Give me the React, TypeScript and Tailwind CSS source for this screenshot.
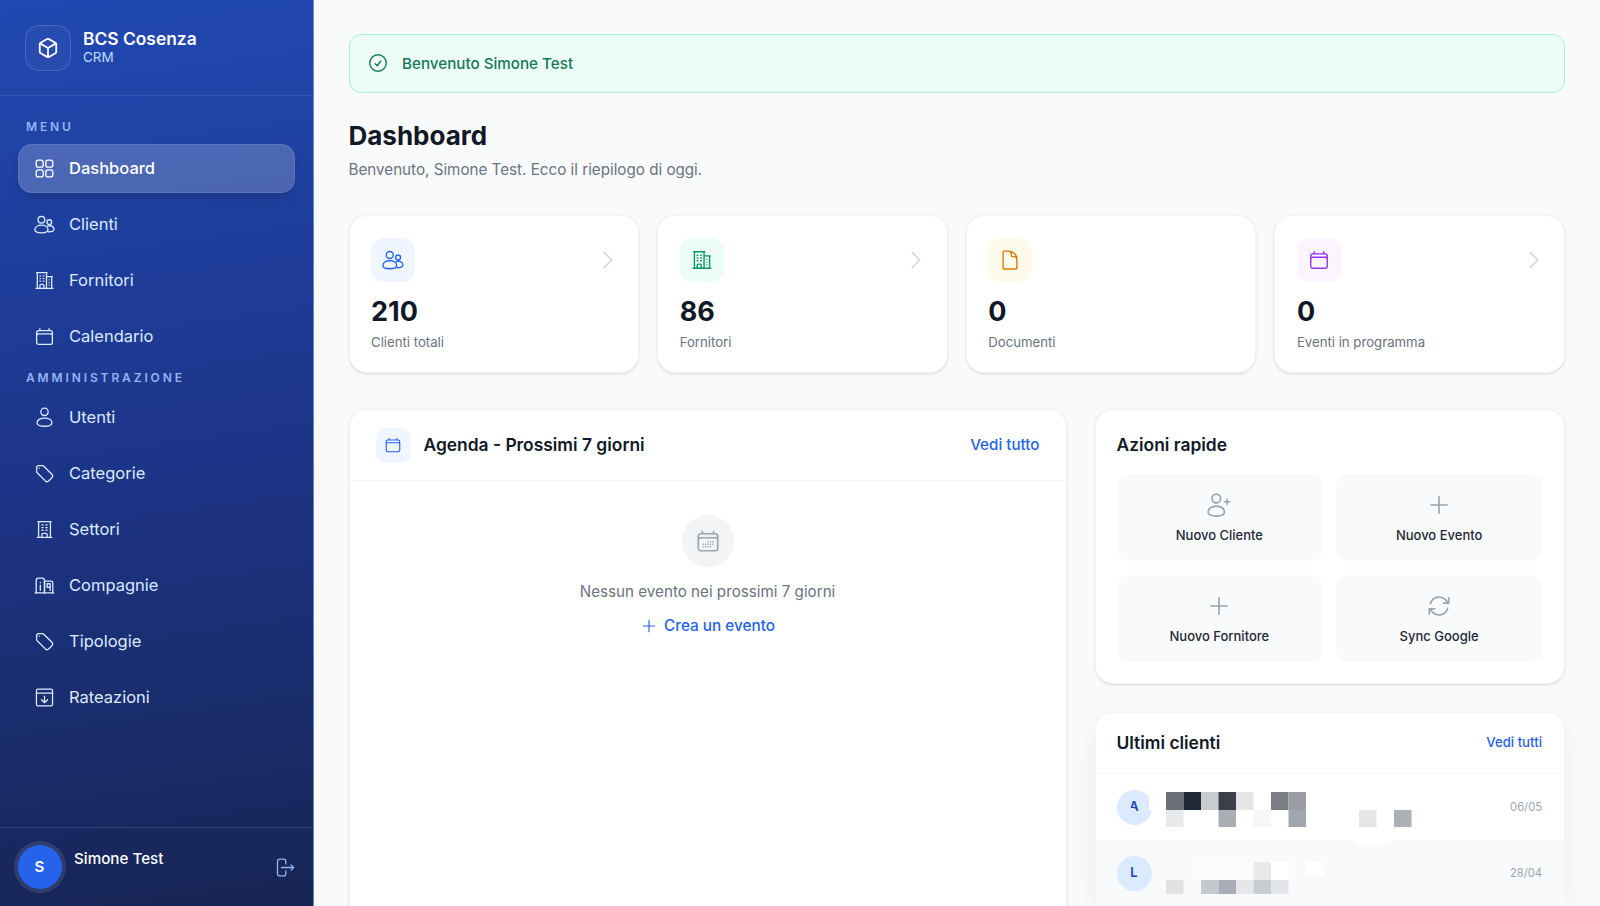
import type { ReactNode } from "react"
import { Box } from "lucide-react"
import {
  HiOutlineArrowPath,
  HiOutlineBuildingOffice,
  HiOutlineBuildingOffice2,
  HiOutlineCalendar,
  HiOutlineCalendarDays,
  HiOutlineCheckCircle,
  HiOutlineChevronRight,
  HiOutlineDocument,
  HiOutlinePlus,
  HiOutlineTag,
} from "react-icons/hi2"

type IconProps = { className?: string }

function Svg({ className, children }: IconProps & { children: ReactNode }) {
  return (
    <svg
      viewBox="0 0 24 24"
      fill="none"
      stroke="currentColor"
      strokeWidth={1.5}
      strokeLinecap="round"
      strokeLinejoin="round"
      className={className}
    >
      {children}
    </svg>
  )
}

function GridIcon({ className }: IconProps) {
  return (
    <Svg className={className}>
      <rect x="2.5" y="2.5" width="8" height="8" rx="2.5" />
      <rect x="13.5" y="2.5" width="8" height="8" rx="2.5" />
      <rect x="2.5" y="13.5" width="8" height="8" rx="2.5" />
      <rect x="13.5" y="13.5" width="8" height="8" rx="2.5" />
    </Svg>
  )
}

function UsersIcon({ className }: IconProps) {
  return (
    <Svg className={className}>
      <circle cx="8.5" cy="6.5" r="3.8" />
      <circle cx="17.5" cy="9.3" r="2.7" />
      <path d="M1 18c0-3 3.2-5.2 7.5-5.2S16 15 16 18c0 2.2-3.2 3.5-7.5 3.5S1 20.2 1 18z" />
      <path d="M15.5 13.8c.8-.3 1.6-.4 2.5-.4 2.5 0 4.8 1.5 4.8 3.8 0 2-2.2 3.3-6.3 3.3" />
    </Svg>
  )
}

function UserIcon({ className }: IconProps) {
  return (
    <Svg className={className}>
      <circle cx="12" cy="5.5" r="4.2" />
      <path d="M3.5 18c0-3.2 3.8-5.2 8.5-5.2s8.5 2 8.5 5.2c0 2.6-3.8 4-8.5 4s-8.5-1.4-8.5-4z" />
    </Svg>
  )
}

function UserPlusIcon({ className }: IconProps) {
  return (
    <Svg className={className}>
      <circle cx="9.5" cy="6" r="4" />
      <path d="M2 18.5c0-3.2 3.2-5.5 7.5-5.500s7.500 2.300 7.500 5.500c0 2.500-3.200 3.800-7.500 3.800S2 21 2 18.500z" />
      <path d="M19.5 6.5v5M17 9h5" />
    </Svg>
  )
}

function CompanyIcon({ className }: IconProps) {
  return (
    <Svg className={className}>
      <path d="M1.5 20.5h21" />
      <path d="M2.5 20.5V6.5c0-1.5 1-3 2.5-3h4.5c1.5 0 2.5 1.5 2.5 3v14" />
      <path d="M12 20.5V7h7.5c1.3 0 2 .8 2 2v11.5" />
      <path d="M7.2 8.5v.4M7.2 11.5v6" />
      <path d="M15 10h3.5v4H15zM18.5 14v3.5" />
    </Svg>
  )
}

function InstallmentIcon({ className }: IconProps) {
  return (
    <Svg className={className}>
      <rect x="2.8" y="2.5" width="18.4" height="19" rx="1.8" />
      <path d="M2.8 7h18.4M12 10.5v7.5M8.5 14.5 12 18l3.5-3.5" />
    </Svg>
  )
}

function LogoutIcon({ className }: IconProps) {
  return (
    <Svg className={className}>
      <path d="M13.5 8V5A2.5 2.5 0 0 0 11 2.5H6.5A2.5 2.5 0 0 0 4 5v14a2.500 2.500 0 0 0 2.500 2.500H11a2.500 2.500 0 0 0 2.500-2.500v-3" />
      <path d="M8.5 12h14M19.5 9l3 3-3 3" />
    </Svg>
  )
}

const menuItems = [
  { label: "Dashboard", icon: GridIcon, active: true },
  { label: "Clienti", icon: UsersIcon },
  { label: "Fornitori", icon: HiOutlineBuildingOffice2 },
  { label: "Calendario", icon: HiOutlineCalendar },
]

const adminItems = [
  { label: "Utenti", icon: UserIcon },
  { label: "Categorie", icon: HiOutlineTag },
  { label: "Settori", icon: HiOutlineBuildingOffice },
  { label: "Compagnie", icon: CompanyIcon },
  { label: "Tipologie", icon: HiOutlineTag },
  { label: "Rateazioni", icon: InstallmentIcon },
]

const stats = [
  { value: "210", label: "Clienti totali", icon: UsersIcon, box: "bg-[#eff6ff]", color: "text-[#2563eb]", arrow: true },
  { value: "86", label: "Fornitori", icon: HiOutlineBuildingOffice2, box: "bg-[#ecfdf5]", color: "text-[#059669]", arrow: true },
  { value: "0", label: "Documenti", icon: HiOutlineDocument, box: "bg-[#fffbeb]", color: "text-[#d97706]", arrow: false },
  { value: "0", label: "Eventi in programma", icon: HiOutlineCalendar, box: "bg-[#faf5ff]", color: "text-[#9333ea]", arrow: true },
]

const quickActions = [
  { label: "Nuovo Cliente", icon: UserPlusIcon },
  { label: "Nuovo Evento", icon: HiOutlinePlus },
  { label: "Nuovo Fornitore", icon: HiOutlinePlus },
  { label: "Sync Google", icon: HiOutlineArrowPath },
]

// mosaic blocks that hide the customer names: [x, y, w, h, colour]
const mosaicOne: [number, number, number, number, string][] = [
  [53, 18, 17, 18, "#ffffff"],
  [31, 34, 7, 4, "#dbeafe"],
  [70, 18, 17.5, 18, "#6b7078"],
  [87.5, 18, 17.5, 18, "#1f2937"],
  [105, 18, 17.5, 18, "#c9cbcf"],
  [122.5, 18, 17.5, 18, "#3a3f4b"],
  [140, 18, 17.5, 18, "#e5e6e7"],
  [175, 18, 17.5, 18, "#7b7f85"],
  [192.5, 18, 17.5, 18, "#9a9ca2"],
  [70, 36, 17.5, 17, "#e8e9ea"],
  [122.5, 36, 17.5, 17, "#a9adb4"],
  [157.5, 36, 17.5, 17, "#f7f7f8"],
  [192.5, 36, 17.5, 17, "#a0a5ae"],
  [263, 36, 17.5, 17, "#e5e6e8"],
  [298, 36, 17.5, 17, "#acb0b7"],
]

const mosaicTwo: [number, number, number, number, string][] = [
  [258, 0, 37, 5, "#ffffff"],
  [100, 22, 57, 18, "#fcfcfd"],
  [157.5, 22, 17.5, 18, "#e8e9eb"],
  [175, 22, 17.5, 18, "#ffffff"],
  [210, 22, 18, 14, "#ffffff"],
  [70, 40, 17.5, 14, "#e0e2e4"],
  [105, 40, 17.5, 14, "#c5c8ce"],
  [122.5, 40, 17.5, 14, "#a9adb8"],
  [140, 40, 17.5, 14, "#e5e7ea"],
  [157.5, 40, 17.5, 14, "#c9ccd3"],
  [175, 40, 17.5, 14, "#e2e4e7"],
]

function NavItem({ label, icon: Icon, active }: { label: string; icon: (p: IconProps) => ReactNode; active?: boolean }) {
  return (
    <a
      href="#"
      className={`mx-[18px] flex h-[49px] items-center gap-[14px] rounded-[14px] border px-[15px] text-[16.5px] ${
        active
          ? "border-white/10 bg-white/20 font-medium text-white shadow-lg"
          : "border-transparent text-[#dbeafe]"
      }`}
    >
      <Icon className="h-[21px] w-[21px] shrink-0" />
      {label}
    </a>
  )
}

function Sidebar() {
  return (
    <aside className="flex h-full w-[314px] shrink-0 flex-col border-r border-[#8ea5e0]/70 bg-[linear-gradient(172deg,#2149b3_0%,#1d3589_50%,#172554_100%)]">
      <div className="flex h-[96px] shrink-0 items-center gap-[12px] border-b border-white/10 px-[25px]">
        <div className="flex h-[46px] w-[46px] items-center justify-center rounded-[14px] border border-white/15 bg-white/3">
          <Box className="h-[22px] w-[22px] text-white" strokeWidth={2} />
        </div>
        <div className="-mt-[3px]">
          <div className="text-[17.4px] leading-[22px] font-semibold text-white">BCS Cosenza</div>
          <div className="text-[13.5px] leading-[15px] text-[#bfdbfe]">CRM</div>
        </div>
      </div>
      <nav className="flex flex-col gap-[7px] pt-[22px]">
        <div className="mb-[2px] h-[17px] px-[26px] text-[12px] leading-[17px] font-semibold tracking-[0.24em] text-[#93b4f5]">MENU</div>
        {menuItems.map((item) => (
          <NavItem key={item.label} {...item} />
        ))}
        <div className="mt-[0.5px] h-[17px] px-[26px] text-[12px] leading-[17px] font-semibold tracking-[0.24em] text-[#93b4f5]">AMMINISTRAZIONE</div>
        {adminItems.map((item) => (
          <NavItem key={item.label} {...item} />
        ))}
      </nav>
      <div className="mt-auto flex h-[79px] shrink-0 items-center border-t border-white/10 pr-[18px] pl-[17.5px]">
        <div className="flex h-[44px] w-[44px] shrink-0 items-center justify-center rounded-full bg-[#2563eb] text-[15px] font-semibold text-white ring-4 ring-white/10">S</div>
        <div className="ml-[12.5px] h-[44px] flex-1 pt-[2px] text-[15.2px] leading-[24px] font-medium text-white">Simone Test</div>
        <LogoutIcon className="h-[21px] w-[21px] text-[#93b4f5]" />
      </div>
    </aside>
  )
}

function StatCard({ value, label, icon: Icon, box, color, arrow }: (typeof stats)[number]) {
  return (
    <div className="h-[158px] rounded-[18px] border border-[#f3f4f6] bg-white p-[21.5px] shadow-sm">
      <div className="flex items-center justify-between">
        <div className={`flex h-[44px] w-[44px] items-center justify-center rounded-[12px] ${box}`}>
          <Icon className={`h-[22px] w-[22px] ${color}`} />
        </div>
        {arrow && <HiOutlineChevronRight className="-mr-[3px] h-[24px] w-[24px] text-[#d1d5db]" />}
      </div>
      <div className="mt-[13px] text-[27px] leading-[33px] font-bold text-[#111827]">{value}</div>
      <div className="mt-[4px] text-[13.2px] leading-[20px] text-[#6b7280]">{label}</div>
    </div>
  )
}

function ClientRow({ letter, date, mosaic, shaded }: { letter: string; date: string; mosaic: typeof mosaicOne; shaded?: boolean }) {
  return (
    <div className={`relative flex h-[66px] items-center justify-between pr-[22px] pl-[21px] ${shaded ? "bg-[#f9fafb]" : ""}`}>
      <div className="flex h-[35px] w-[35px] items-center justify-center rounded-full bg-[#dbeafe] text-[13px] font-semibold text-[#1e40af]">{letter}</div>
      <span className="text-[11.2px] text-[#9ca3af]">{date}</span>
      <svg className="absolute top-0 left-0 h-[66px] w-[340px]" viewBox="0 0 340 66">
        {mosaic.map(([x, y, w, h, fill]) => (
          <rect key={`${x}-${y}`} x={x} y={y} width={w} height={h} fill={fill} />
        ))}
      </svg>
    </div>
  )
}

export default function App() {
  return (
    <div className="flex h-screen overflow-hidden bg-[#f9fafb] [font-family:Inter,sans-serif]">
      <Sidebar />
      <main className="min-w-0 flex-1 pt-[34px] pr-[35px] pl-[34.5px]">
        <div className="flex h-[58.5px] items-center gap-[13px] rounded-[12px] border border-[#a7f3d0] bg-[#ecfdf5] pt-[1.5px] pr-[18px] pl-[17.5px] text-[15.2px] font-medium text-[#16785a]">
          <HiOutlineCheckCircle className="-mt-[1.5px] h-[22px] w-[22px] shrink-0" />
          Benvenuto Simone Test
        </div>

        <h1 className="mt-[26.5px] text-[26px] leading-[34px] font-bold text-[#111827]">Dashboard</h1>
        <p className="mt-[4.5px] text-[15.2px] leading-[24px] text-[#6b7280]">Benvenuto, Simone Test. Ecco il riepilogo di oggi.</p>

        <div className="mt-[33.5px] grid grid-cols-4 gap-[18px]">
          {stats.map((stat) => (
            <StatCard key={stat.label} {...stat} />
          ))}
        </div>

        <div className="mt-[36px] flex items-start gap-[28px]">
          <section className="h-[600px] w-[718px] shrink-0 rounded-[18px] border border-[#f3f4f6] bg-white shadow-sm">
            <div className="flex h-[71px] items-center justify-between border-b border-[#f3f4f6] px-[26px]">
              <div className="flex items-center gap-[13px]">
                <div className="flex h-[35px] w-[35px] items-center justify-center rounded-[10px] bg-[#eff6ff]">
                  <HiOutlineCalendar className="h-[18px] w-[18px] text-[#2563eb]" />
                </div>
                <h2 className="text-[17.4px] font-semibold text-[#111827]">Agenda - Prossimi 7 giorni</h2>
              </div>
              <a href="#" className="text-[15.2px] font-medium text-[#2563eb]">Vedi tutto</a>
            </div>
            <div className="flex flex-col items-center pt-[34px]">
              <div className="flex h-[52px] w-[52px] items-center justify-center rounded-full bg-[#f3f4f6]">
                <HiOutlineCalendarDays className="h-[26px] w-[26px] text-[#9ca3af]" />
              </div>
              <p className="mt-[13px] text-[15.2px] leading-[24px] text-[#6b7280]">Nessun evento nei prossimi 7 giorni</p>
              <a href="#" className="mt-[10px] flex items-center gap-[6px] text-[15.3px] leading-[24px] font-medium text-[#2563eb]">
                <HiOutlinePlus className="h-[18px] w-[18px]" />
                Crea un evento
              </a>
            </div>
          </section>

          <div className="flex min-w-0 flex-1 flex-col gap-[28px]">
            <section className="rounded-[18px] border border-[#f3f4f6] bg-white pt-[23px] pr-[22px] pb-[21px] pl-[21px] shadow-sm">
              <h2 className="text-[17.4px] leading-[24px] font-semibold text-[#111827]">Azioni rapide</h2>
              <div className="mt-[17px] grid grid-cols-2 gap-[14px]">
                {quickActions.map(({ label, icon: Icon }) => (
                  <a key={label} href="#" className="flex h-[87px] flex-col items-center justify-center gap-[8px] rounded-[12px] bg-[#f9fafb] pt-[3px] text-[13px] font-medium text-[#1f2937]">
                    <Icon className="h-[26px] w-[26px] text-[#9ca3af]" />
                    {label}
                  </a>
                ))}
              </div>
            </section>

            <section className="rounded-[18px] border border-[#f3f4f6] bg-white shadow-[0_10px_30px_rgba(0,0,0,0.05)]">
              <div className="flex h-[61px] items-center justify-between border-b border-[#f3f4f6] pr-[22px] pl-[21px]">
                <h2 className="text-[17.4px] font-semibold text-[#111827]">Ultimi clienti</h2>
                <a href="#" className="text-[13.2px] font-medium text-[#2563eb]">Vedi tutti</a>
              </div>
              <ClientRow letter="A" date="06/05" mosaic={mosaicOne} />
              <ClientRow letter="L" date="28/04" mosaic={mosaicTwo} shaded />
            </section>
          </div>
        </div>
      </main>
    </div>
  )
}
